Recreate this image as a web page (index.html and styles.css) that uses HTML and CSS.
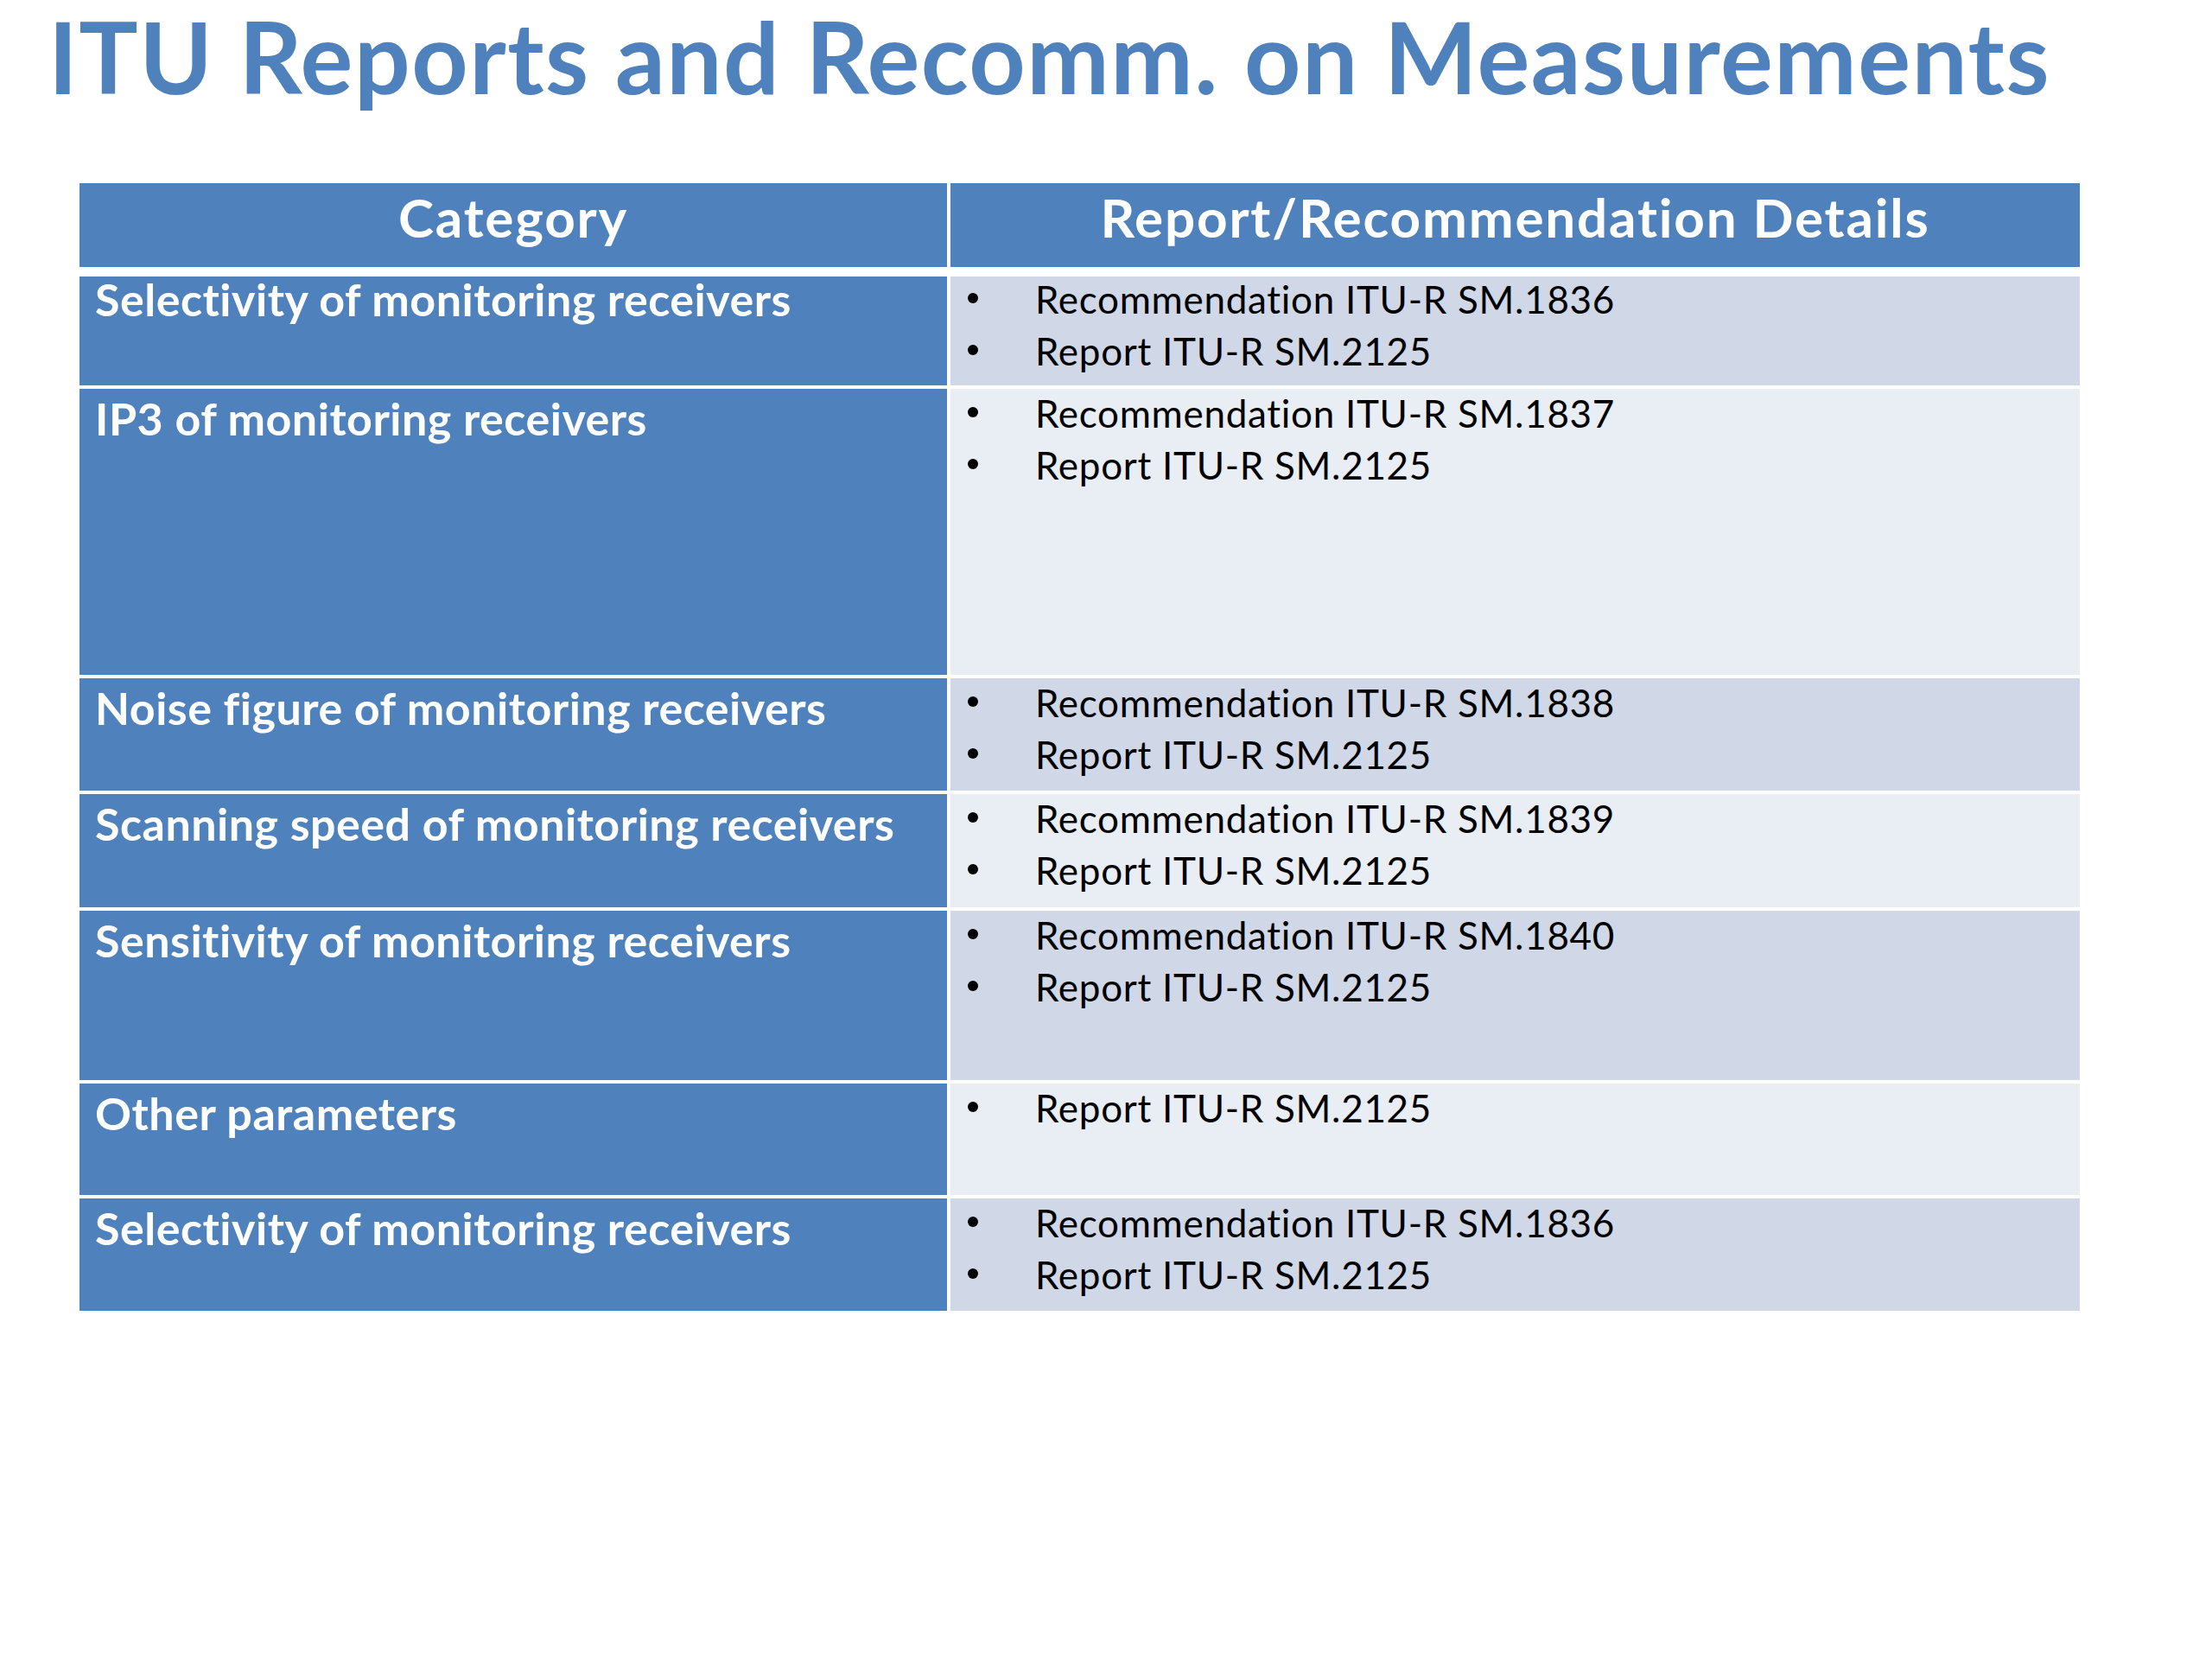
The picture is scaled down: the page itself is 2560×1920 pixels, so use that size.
FILE: index.html
```html
<!DOCTYPE html>
<html lang="en">
<head>
<meta charset="utf-8">
<title>ITU Reports and Recomm. on Measurements</title>
<link rel="stylesheet" href="styles.css">
</head>
<body>
<main class="slide">
  <h1 class="title">ITU Reports and Recomm. on Measurements</h1>
  <div class="table">
    <div class="th">Category</div>
    <div class="th">Report/Recommendation Details</div>

    <div class="cat first">Selectivity of monitoring receivers</div>
    <div class="det odd first"><ul><li>Recommendation ITU-R SM.1836</li><li>Report ITU-R SM.2125</li></ul></div>

    <div class="cat">IP3 of monitoring receivers</div>
    <div class="det even"><ul><li>Recommendation ITU-R SM.1837</li><li>Report ITU-R SM.2125</li></ul></div>

    <div class="cat">Noise figure of monitoring receivers</div>
    <div class="det odd"><ul><li>Recommendation ITU-R SM.1838</li><li>Report ITU-R SM.2125</li></ul></div>

    <div class="cat">Scanning speed of monitoring receivers</div>
    <div class="det even"><ul><li>Recommendation ITU-R SM.1839</li><li>Report ITU-R SM.2125</li></ul></div>

    <div class="cat">Sensitivity of monitoring receivers</div>
    <div class="det odd"><ul><li>Recommendation ITU-R SM.1840</li><li>Report ITU-R SM.2125</li></ul></div>

    <div class="cat">Other parameters</div>
    <div class="det even"><ul><li>Report ITU-R SM.2125</li></ul></div>

    <div class="cat">Selectivity of monitoring receivers</div>
    <div class="det odd"><ul><li>Recommendation ITU-R SM.1836</li><li>Report ITU-R SM.2125</li></ul></div>
  </div>
</main>
</body>
</html>
```
FILE: styles.css
```css
html, body {
  margin: 0;
  padding: 0;
  background: #ffffff;
}

body {
  font-family: Lato, "Open Sans", "Liberation Sans", sans-serif;
  color: #000000;
}

.slide {
  width: 2560px;
  min-height: 1920px;
  box-sizing: border-box;
  padding: 0 0 0 56px;
}

.title {
  margin: 0;
  padding-top: 5px;
  font-size: 114px;
  line-height: 120px;
  letter-spacing: 1.5px;
  font-weight: 700;
  color: #4f81bd;
  white-space: nowrap;
}

.table {
  display: grid;
  grid-template-columns: 1004px 1307px;
  grid-template-rows: 104px 126px 331px 130px 131px 196px 129px 130px;
  column-gap: 4px;
  row-gap: 4px;
  margin-top: 87px;
  margin-left: 36px;
}

.th {
  align-self: start;
  height: 97px;
  box-sizing: border-box;
  background: #4f81bd;
  color: #ffffff;
  font-weight: 700;
  font-size: 62px;
  line-height: 70px;
  letter-spacing: 1.8px;
  text-align: center;
  padding-top: 4px;
}

.cat {
  background: #4f81bd;
  color: #ffffff;
  font-weight: 700;
  font-size: 52px;
  line-height: 52px;
  letter-spacing: 0.5px;
  padding: 8px 0 0 18px;
  white-space: nowrap;
}

.cat.first {
  padding-top: 0;
}

.det {
  font-size: 44px;
  line-height: 60px;
  letter-spacing: 0.7px;
}

.odd {
  background: #d0d8e8;
}

.even {
  background: #e9edf4;
}

.det ul {
  list-style: none;
  margin: -2px 0 0 0;
  padding: 0;
}

.det.first ul {
  margin-top: -4px;
}

.det li {
  display: flex;
  align-items: flex-start;
  white-space: nowrap;
}

.det li::before {
  content: "";
  flex: 0 0 auto;
  width: 12px;
  height: 12px;
  border-radius: 50%;
  background: #000000;
  margin: 23px 66px 0 20px;
}
```
